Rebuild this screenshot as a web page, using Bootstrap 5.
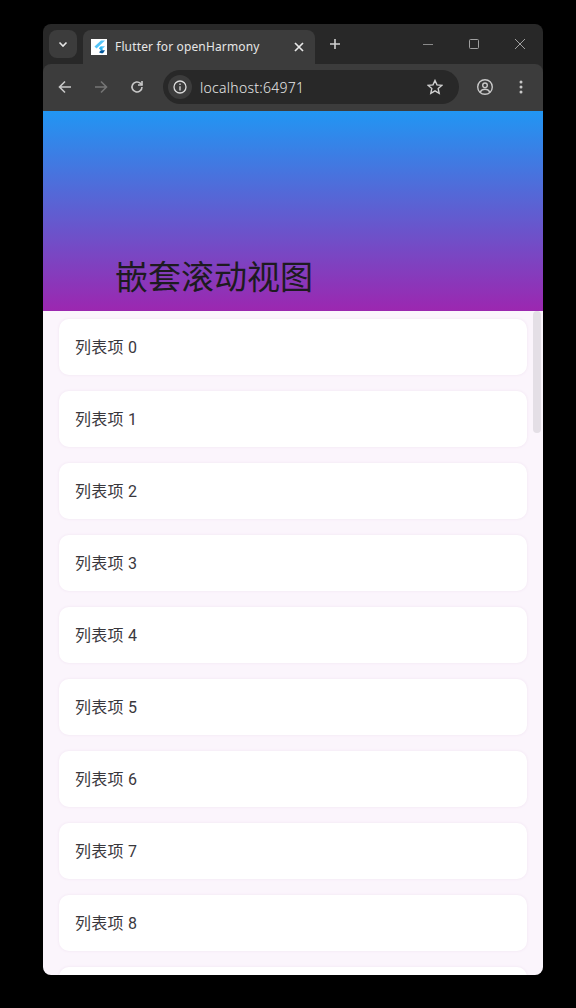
<!DOCTYPE html>
<html lang="zh">
<head>
<meta charset="utf-8">
<title>Flutter for openHarmony</title>
<link href="https://cdn.jsdelivr.net/npm/bootstrap@5.3.0/dist/css/bootstrap.min.css" rel="stylesheet">
<style>
html,body{height:100%;background:#000;overflow:hidden}
body{padding:24px 33px 33px 43px;font-family:"Noto Sans","Noto Sans CJK SC",sans-serif}
.win{width:500px;height:951px;background:#282828;border-radius:8px;overflow:hidden;position:relative}
.tabstrip{height:40px;padding:6px 0 0 6px}
.tabmenu{width:28px;height:28px;border-radius:8px;background:#3c3c3c;flex:none}
.tabbox{width:232px;height:34px;margin-left:6px;background:#3c3c3c;border-radius:8px 8px 0 0;padding:0 11px 0 8px;color:#e6e6e6;font-size:12px;letter-spacing:.15px}
.favicon{width:16px;height:16px;background:#fff;flex:none}
.tabtitle{flex:1;margin-left:8px;white-space:nowrap;font-family:"Noto Sans",sans-serif;font-weight:400}
.newtab{margin-left:14px}
.wctl{margin-left:auto;gap:0}
.wctl span{width:46px;display:flex;justify-content:center}
.toolbar{height:47px;background:#3c3c3c;border-radius:8px 8px 0 0;padding:0 10px 1px 0;position:relative}
.navic{width:36px;display:flex;justify-content:center;flex:none}
.omni{width:296px;height:34px;background:#282828;border-radius:17px;margin-left:8px;padding:0 16px 0 5px;color:#e8e8e8;font-size:14px;flex:none}
.infobtn{width:24px;height:24px;border-radius:50%;background:#3c3c3c;flex:none}
.url{margin-left:8px;font-family:"Noto Sans",sans-serif;letter-spacing:.27px;font-weight:300}
.viewport{height:864px;background:#fbf5fc;overflow:hidden;position:relative}
.hero{height:200px;background:linear-gradient(180deg,#2196f3,#9c27b0);padding:0 0 16px 72px;color:#1d1b20;font-size:33px;line-height:40px;font-family:"Noto Sans CJK SC",sans-serif;font-weight:400}
.listwrap{padding:8px 16px 0}
.rowitem{height:56px;margin-bottom:16px;background:#fff;border-radius:10px;box-shadow:0 0 2px 1px #f6edf7;padding:2px 16px 0;color:#3a383d;font-size:16px;letter-spacing:.25px;font-family:Roboto,"Noto Sans CJK SC",sans-serif;font-weight:400}
.thumb{position:absolute;right:2px;top:200px;width:8px;height:122px;background:#e4dfe6;border-radius:4px}
svg{display:block}
</style>
</head>
<body>
<div class="win">
  <div class="tabstrip d-flex align-items-start">
    <div class="tabmenu d-flex align-items-center justify-content-center">
      <svg width="12" height="12" viewBox="0 0 12 12" fill="none" stroke="#e6e6e6" stroke-width="1.6"><path d="M2.5 4.500 6 8l3.500-3.500"/></svg>
    </div>
    <div class="tabbox d-flex align-items-center">
      <span class="favicon">
        <svg width="16" height="16" viewBox="0 0 16 16"><path d="M10 1.500h4L5.500 9.500 3.500 7.500z" fill="#54c5f8"/><path d="M10 7.200h4L10 11.200 8 9.200z" fill="#54c5f8"/><path d="M8 9.200l2-2 2 4H10z" fill="#29b6f6"/><path d="M8 13.200l2-2h4l-2 3H10z" fill="#01579b"/></svg>
      </span>
      <span class="tabtitle">Flutter for openHarmony</span>
      <svg width="10" height="10" viewBox="0 0 10 10" stroke="#e8e8e8" stroke-width="1.700"><path d="M1 1l8 8M9 1l-8 8"/></svg>
    </div>
    <svg class="newtab mt-2" width="12" height="12" viewBox="0 0 12 12" stroke="#d0d0d0" stroke-width="1.600"><path d="M6 1v10M1 6h10"/></svg>
    <div class="wctl d-flex mt-2">
      <span><svg width="12" height="12" viewBox="0 0 12 12" stroke="#8a8a8a"><path d="M1 6.500h10"/></svg></span>
      <span><svg width="12" height="12" viewBox="0 0 12 12" fill="none" stroke="#a0a0a0"><rect x="1.500" y="1.500" width="9" height="9" rx="1"/></svg></span>
      <span><svg width="12" height="12" viewBox="0 0 12 12" stroke="#a0a0a0"><path d="M1 1l10 10M11 1 1 11"/></svg></span>
    </div>
  </div>
  <div class="toolbar d-flex align-items-center">
    <span class="navic ms-1"><svg width="16" height="16" viewBox="0 0 16 16" fill="none" stroke="#c8c8c8" stroke-width="1.600"><path d="M14 8H2.500M8 2.500 2.500 8 8 13.500"/></svg></span>
    <span class="navic"><svg width="16" height="16" viewBox="0 0 16 16" fill="none" stroke="#757575" stroke-width="1.600"><path d="M2 8h11.500M8 2.500 13.500 8 8 13.500"/></svg></span>
    <span class="navic"><svg width="16" height="16" viewBox="0 0 16 16" fill="none" stroke="#c8c8c8" stroke-width="1.600"><path d="M13 8a5 5 0 1 1-1.500-3.600L13 6"/><path d="M13 2v4H9"/></svg></span>
    <div class="omni d-flex align-items-center">
      <span class="infobtn d-flex align-items-center justify-content-center"><svg width="14" height="14" viewBox="0 0 14 14" fill="none" stroke="#dcdcdc" stroke-width="1.300"><circle cx="7" cy="7" r="6"/><path d="M7 6.200V10.500M7 3.400v1.500"/></svg></span>
      <span class="url flex-grow-1">localhost:64971</span>
      <svg width="16" height="16" viewBox="0 0 16 16" fill="none" stroke="#d0d0d0" stroke-width="1.400"><path d="M8 1.500l2 4.400 4.800.5-3.600 3.200 1 4.700L8 11.900l-4.200 2.400 1-4.700L1.200 6.400 6 5.900z"/></svg>
    </div>
    <span class="navic ms-2"><svg width="18" height="18" viewBox="0 0 18 18" fill="none" stroke="#c8c8c8" stroke-width="1.400"><circle cx="9" cy="9" r="7.300"/><circle cx="9" cy="7.300" r="2.300"/><path d="M4.300 14c1-2 2.700-2.800 4.700-2.800s3.700.8 4.700 2.800"/></svg></span>
    <span class="navic"><svg width="4" height="14" viewBox="0 0 4 14" fill="#c8c8c8"><circle cx="2" cy="2" r="1.500"/><circle cx="2" cy="7" r="1.500"/><circle cx="2" cy="12" r="1.500"/></svg></span>
  </div>
  <div class="viewport">
    <div class="hero d-flex align-items-end">嵌套滚动视图</div>
    <div class="listwrap">
      <div class="rowitem d-flex align-items-center">列表项 0</div>
      <div class="rowitem d-flex align-items-center">列表项 1</div>
      <div class="rowitem d-flex align-items-center">列表项 2</div>
      <div class="rowitem d-flex align-items-center">列表项 3</div>
      <div class="rowitem d-flex align-items-center">列表项 4</div>
      <div class="rowitem d-flex align-items-center">列表项 5</div>
      <div class="rowitem d-flex align-items-center">列表项 6</div>
      <div class="rowitem d-flex align-items-center">列表项 7</div>
      <div class="rowitem d-flex align-items-center">列表项 8</div>
      <div class="rowitem"></div>
    </div>
    <div class="thumb"></div>
  </div>
</div>
<script src="https://cdn.jsdelivr.net/npm/bootstrap@5.3.0/dist/js/bootstrap.bundle.min.js"></script>
</body>
</html>
